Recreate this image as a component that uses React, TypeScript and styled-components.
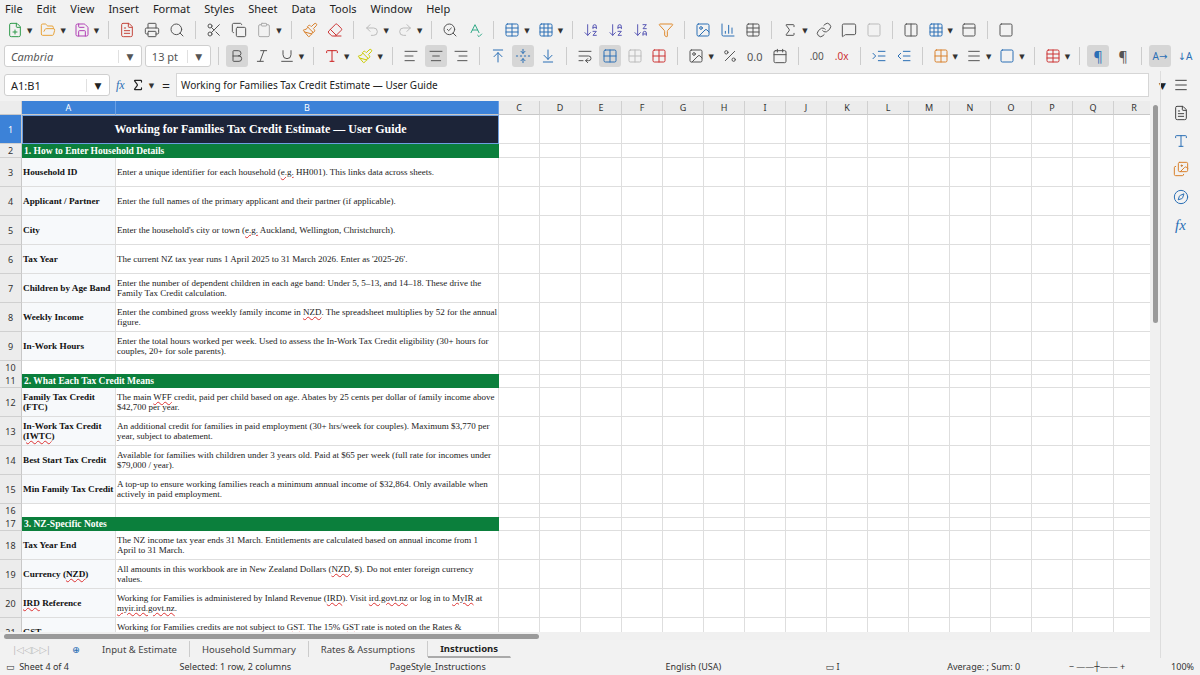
import React from "react";
import styled, { createGlobalStyle } from "styled-components";
import {
  FilePlus, FolderOpen, Save, FileText, Printer, Search, Scissors, Copy, Clipboard, Paintbrush, Eraser,
  Undo2, Redo2, SearchCheck, SpellCheck, Table, Grid3x3, ArrowDownAZ, ArrowDownZA, Filter, Image, BarChart3,
  Sigma, Link, MessageSquare, Square, Columns2, PanelTop, Bold, Italic, Underline,
  AlignLeft, AlignCenter, AlignRight, ArrowUpToLine, FoldVertical, ArrowDownToLine, WrapText, Percent,
  Calendar, IndentIncrease, IndentDecrease, Grid2x2, Menu, Type, Images, Compass,
} from "lucide-react";

const Global = createGlobalStyle`
  html, body { margin: 0; padding: 0; background: #f0f0f0; overflow: hidden; }
  body { font-family: "Noto Sans", "DejaVu Sans", sans-serif; font-size: 12px; color: #222; }
`;

const Frame = styled.div`
  width: 1200px; height: 675px; display: flex; flex-direction: column; background: #f2f2f2;
`;

const MenuBar = styled.div`
  height: 17px; display: flex; align-items: center; gap: 14px; padding-left: 5px; font-size: 11px;
`;

const ToolRow = styled.div`
  height: 26px; display: flex; align-items: center; gap: 3px; padding: 0 4px; color: #555;
  svg { width: 16px; height: 16px; stroke-width: 1.5; }
`;

const Sep = styled.div` width: 1px; height: 18px; background: #ccc; margin: 0 4px; `;

const Btn = styled.div<{ $on?: boolean; $c?: string }>`
  width: 22px; height: 22px; display: flex; align-items: center; justify-content: center;
  border-radius: 3px; background: ${(p) => (p.$on ? "#d6d6d6" : "transparent")}; color: ${(p) => p.$c || "#555"};
`;

const Caret = styled.span` font-size: 7px; color: #333; margin: 0 2px 0 -2px; `;

const Combo = styled.div<{ $w: number }>`
  width: ${(p) => p.$w}px; height: 22px; background: #fff; border: 1px solid #cfcfcf; border-radius: 3px;
  display: flex; align-items: center; justify-content: space-between; padding-left: 6px; font-size: 11px;
  box-sizing: border-box;
  span:last-child { width: 22px; text-align: center; font-size: 9px; border-left: 1px solid #e0e0e0; }
`;

const FormulaRow = styled.div`
  height: 28px; display: flex; align-items: center; gap: 6px; padding: 0 4px; margin-top: 2px;
`;

const FormulaInput = styled.div`
  flex: 1; height: 22px; background: #fff; border: 1px solid #d6d6d6; display: flex; align-items: center;
  padding-left: 4px; font-size: 10px; margin-right: 4px;
`;

const Body = styled.div` flex: 1; display: flex; min-height: 0; margin-top: 2px; `;
const SheetArea = styled.div` width: 1160px; display: flex; flex-direction: column; `;
const GridWrap = styled.div` height: 534px; display: flex; overflow: hidden; background: #fff; `;
const GridInner = styled.div` width: 1150px; overflow: hidden; `;
const VScroll = styled.div`
  width: 10px; background: #f0f0f0; display: flex; justify-content: center; padding-top: 4px;
  div { width: 5px; height: 218px; background: #9a9a9a; border-radius: 3px; }
`;

const COLS = "22px 94px 383px repeat(16, 41px)";
const GridRow = styled.div<{ $h: number }>`
  display: grid; grid-template-columns: ${COLS}; height: ${(p) => p.$h}px;
`;

const ColHead = styled.div<{ $sel?: boolean }>`
  background: ${(p) => (p.$sel ? "#3c82d8" : "#ececec")}; color: ${(p) => (p.$sel ? "#fff" : "#333")};
  border-right: 1px solid ${(p) => (p.$sel ? "#6aa0e6" : "#d0d0d0")}; border-bottom: 1px solid #c8c8c8;
  font-size: 9px; display: flex; align-items: center; justify-content: center;
`;

const RowHead = styled.div<{ $sel?: boolean }>`
  background: ${(p) => (p.$sel ? "#3c82d8" : "#ececec")}; color: ${(p) => (p.$sel ? "#fff" : "#333")};
  border-bottom: 1px solid #d0d0d0; border-right: 1px solid #c8c8c8;
  font-size: 9px; display: flex; align-items: center; justify-content: center;
`;

const Cell = styled.div`
  border-right: 1px solid #dedede; border-bottom: 1px solid #dedede; box-sizing: border-box; overflow: hidden;
`;

const Title = styled.div`
  grid-column: span 2; background: #1c2438; color: #fff; border: 1px solid #6d9fe0;
  font-family: "Liberation Serif", "DejaVu Serif", serif; font-weight: bold; font-size: 12px;
  display: flex; align-items: center; justify-content: center;
`;

const Section = styled.div`
  grid-column: span 2; background: #0b7f3c; color: #fff; font-family: "Liberation Serif", serif;
  font-weight: bold; font-size: 9.5px; display: flex; align-items: center; padding-left: 2px;
`;

const Label = styled(Cell)`
  background: #f7f9fb; font-family: "Liberation Serif", serif; font-weight: bold; font-size: 9.2px;
  display: flex; align-items: center; padding-left: 1px; line-height: 10px; color: #111;
`;

const Desc = styled(Cell)`
  font-family: "Liberation Serif", serif; font-size: 9px; display: flex; align-items: center;
  padding: 0 1px; line-height: 10.5px; color: #222;
`;

const Typo = styled.span` text-decoration: underline wavy #d33; text-decoration-thickness: 1px; `;

const HScroll = styled.div`
  height: 8px; background: #f0f0f0; display: flex; align-items: center; padding-left: 4px;
  div { width: 535px; height: 5px; background: #9a9a9a; border-radius: 3px; }
`;

const TabBar = styled.div`
  height: 18px; display: flex; align-items: center; font-size: 9.5px; color: #444;
`;
const Tab = styled.div<{ $on?: boolean }>`
  padding: 0 12px; height: 16px; display: flex; align-items: center;
  border-right: 1px solid ${(p) => (p.$on ? "transparent" : "#ccc")};
  ${(p) => p.$on && "font-weight: bold; color: #222; border-bottom: 2px solid #aaa;"}
`;

const StatusBar = styled.div`
  height: 17px; display: flex; align-items: center; font-size: 9px; color: #333; background: #f2f2f2;
`;
const Stat = styled.div<{ $w: number }>` width: ${(p) => p.$w}px; padding-left: 6px; `;

const SideBar = styled.div`
  width: 40px; display: flex; flex-direction: column; align-items: center; gap: 12px; padding-top: 6px;
  border-left: 1px solid #ddd; color: #2a6fb5; margin-top: -30px;
  svg { width: 16px; height: 16px; stroke-width: 1.5; }
`;

const U = (s: string) => <Typo>{s}</Typo>;

type R = { n: number; h: number; label?: React.ReactNode; desc?: React.ReactNode; section?: string };
const rows: R[] = [
  { n: 2, h: 14, section: "1. How to Enter Household Details" },
  { n: 3, h: 29, label: "Household ID", desc: <>Enter a unique identifier for each household ({U("e.g.")} HH001). This links data across sheets.</> },
  { n: 4, h: 29, label: "Applicant / Partner", desc: "Enter the full names of the primary applicant and their partner (if applicable)." },
  { n: 5, h: 29, label: "City", desc: <>Enter the household's city or town ({U("e.g.")} Auckland, Wellington, Christchurch).</> },
  { n: 6, h: 29, label: "Tax Year", desc: "The current NZ tax year runs 1 April 2025 to 31 March 2026. Enter as '2025-26'." },
  { n: 7, h: 29, label: "Children by Age Band", desc: "Enter the number of dependent children in each age band: Under 5, 5–13, and 14–18. These drive the Family Tax Credit calculation." },
  { n: 8, h: 29, label: "Weekly Income", desc: <>Enter the combined gross weekly family income in {U("NZD")}. The spreadsheet multiplies by 52 for the annual figure.</> },
  { n: 9, h: 29, label: "In-Work Hours", desc: "Enter the total hours worked per week. Used to assess the In-Work Tax Credit eligibility (30+ hours for couples, 20+ for sole parents)." },
  { n: 10, h: 13 },
  { n: 11, h: 14, section: "2. What Each Tax Credit Means" },
  { n: 12, h: 29, label: "Family Tax Credit (FTC)", desc: <>The main {U("WFF")} credit, paid per child based on age. Abates by 25 cents per dollar of family income above $42,700 per year.</> },
  { n: 13, h: 29, label: <>In-Work Tax Credit ({U("IWTC")})</>, desc: "An additional credit for families in paid employment (30+ hrs/week for couples). Maximum $3,770 per year, subject to abatement." },
  { n: 14, h: 29, label: "Best Start Tax Credit", desc: "Available for families with children under 3 years old. Paid at $65 per week (full rate for incomes under $79,000 / year)." },
  { n: 15, h: 29, label: "Min Family Tax Credit", desc: "A top-up to ensure working families reach a minimum annual income of $32,864. Only available when actively in paid employment." },
  { n: 16, h: 13 },
  { n: 17, h: 14, section: "3. NZ-Specific Notes" },
  { n: 18, h: 29, label: "Tax Year End", desc: "The NZ income tax year ends 31 March. Entitlements are calculated based on annual income from 1 April to 31 March." },
  { n: 19, h: 29, label: <>Currency ({U("NZD")})</>, desc: <>All amounts in this workbook are in New Zealand Dollars ({U("NZD")}, $). Do not enter foreign currency values.</> },
  { n: 20, h: 29, label: <>{U("IRD")} Reference</>, desc: <>Working for Families is administered by Inland Revenue ({U("IRD")}). Visit {U("ird.govt.nz")} or log in to {U("MyIR")} at {U("myir.ird.govt.nz")}.</> },
  { n: 21, h: 29, label: "GST", desc: <>Working for Families credits are not subject to {U("GST")}. The 15% {U("GST")} rate is noted on the Rates &amp; Assumptions sheet.</> },
];

const letters = "CDEFGHIJKLMNOPQR".split("");
const Empties = () => <>{letters.map((l) => <Cell key={l} />)}</>;

export default function App() {
  return (
    <Frame>
      <Global />
      <MenuBar>
        {["File", "Edit", "View", "Insert", "Format", "Styles", "Sheet", "Data", "Tools", "Window", "Help"].map((m) => <span key={m}>{m}</span>)}
      </MenuBar>
      <ToolRow>
        <Btn $c="#2e9a4a"><FilePlus /></Btn><Caret>▼</Caret>
        <Btn $c="#e8a33a"><FolderOpen /></Btn><Caret>▼</Caret>
        <Btn $c="#b13fb5"><Save /></Btn><Caret>▼</Caret><Sep />
        <Btn $c="#c4453c"><FileText /></Btn><Btn><Printer /></Btn><Btn><Search /></Btn><Sep />
        <Btn><Scissors /></Btn><Btn><Copy /></Btn><Btn $c="#aaa"><Clipboard /></Btn><Caret>▼</Caret><Sep />
        <Btn $c="#d9812c"><Paintbrush /></Btn><Btn $c="#c33"><Eraser /></Btn><Sep />
        <Btn $c="#bbb"><Undo2 /></Btn><Caret>▼</Caret><Btn $c="#bbb"><Redo2 /></Btn><Caret>▼</Caret><Sep />
        <Btn><SearchCheck /></Btn><Btn $c="#3a8"><SpellCheck /></Btn><Sep />
        <Btn $c="#2a6fb5"><Table /></Btn><Caret>▼</Caret><Btn $c="#2a6fb5"><Grid3x3 /></Btn><Caret>▼</Caret><Sep />
        <Btn $c="#5a5ab5"><ArrowDownAZ /></Btn><Btn $c="#5a5ab5"><ArrowDownAZ /></Btn><Btn $c="#5a5ab5"><ArrowDownZA /></Btn><Btn $c="#e08a2c"><Filter /></Btn><Sep />
        <Btn $c="#2a6fb5"><Image /></Btn><Btn $c="#2a6fb5"><BarChart3 /></Btn><Btn><Table /></Btn><Sep />
        <Btn><Sigma /></Btn><Caret>▼</Caret><Btn><Link /></Btn><Btn><MessageSquare /></Btn><Btn $c="#bbb"><Square /></Btn><Sep />
        <Btn><Columns2 /></Btn><Btn $c="#2a6fb5"><Grid3x3 /></Btn><Caret>▼</Caret><Btn><PanelTop /></Btn><Sep /><Btn><Square /></Btn>
      </ToolRow>
      <ToolRow>
        <Combo $w={138}><i>Cambria</i><span>▼</span></Combo>
        <Combo $w={66}><span>13 pt</span><span>▼</span></Combo><Sep />
        <Btn $on><Bold /></Btn><Btn><Italic /></Btn><Btn><Underline /></Btn><Caret>▼</Caret><Sep />
        <Btn $c="#c22"><Type /></Btn><Caret>▼</Caret><Btn $c="#cc0"><Paintbrush /></Btn><Caret>▼</Caret><Sep />
        <Btn><AlignLeft /></Btn><Btn $on><AlignCenter /></Btn><Btn><AlignRight /></Btn><Sep />
        <Btn $c="#2a6fb5"><ArrowUpToLine /></Btn><Btn $on $c="#2a6fb5"><FoldVertical /></Btn><Btn $c="#2a6fb5"><ArrowDownToLine /></Btn><Sep />
        <Btn><WrapText /></Btn><Btn $on $c="#2a6fb5"><Grid2x2 /></Btn><Btn $c="#bbb"><Grid2x2 /></Btn><Btn $c="#c33"><Grid2x2 /></Btn><Sep />
        <Btn><Image /></Btn><Caret>▼</Caret><Btn><Percent /></Btn><Btn><span style={{ fontSize: 11 }}>0.0</span></Btn><Btn><Calendar /></Btn><Sep />
        <Btn><span style={{ fontSize: 10 }}>.00</span></Btn><Btn $c="#c33"><span style={{ fontSize: 10 }}>.0x</span></Btn><Sep />
        <Btn $c="#2a6fb5"><IndentIncrease /></Btn><Btn $c="#2a6fb5"><IndentDecrease /></Btn><Sep />
        <Btn $c="#d9812c"><Grid2x2 /></Btn><Caret>▼</Caret><Btn><Menu /></Btn><Caret>▼</Caret><Btn $c="#2a6fb5"><Square /></Btn><Caret>▼</Caret><Sep />
        <Btn $c="#c33"><Table /></Btn><Caret>▼</Caret><Sep />
        <Btn $on $c="#2a6fb5"><span style={{ fontSize: 14 }}>¶</span></Btn><Btn><span style={{ fontSize: 14 }}>¶</span></Btn><Sep />
        <Btn $on $c="#2a6fb5"><span style={{ fontSize: 10 }}>A→</span></Btn><Btn $c="#2a6fb5"><span style={{ fontSize: 10 }}>↓A</span></Btn>
      </ToolRow>
      <FormulaRow>
        <Combo $w={106}><span>A1:B1</span><span>▼</span></Combo>
        <span style={{ color: "#2a6fb5", fontStyle: "italic", fontFamily: "serif" }}>fx</span>
        <Sigma size={14} /><Caret>▼</Caret><span style={{ fontSize: 14 }}>=</span>
        <FormulaInput>Working for Families Tax Credit Estimate — User Guide</FormulaInput>
        <span style={{ fontSize: 9, marginRight: 30 }}>▼</span>
      </FormulaRow>
      <Body>
        <SheetArea>
          <GridWrap>
            <GridInner>
              <GridRow $h={14}>
                <ColHead /><ColHead $sel>A</ColHead><ColHead $sel>B</ColHead>
                {letters.map((l) => <ColHead key={l}>{l}</ColHead>)}
              </GridRow>
              <GridRow $h={29}>
                <RowHead $sel>1</RowHead>
                <Title>Working for Families Tax Credit Estimate — User Guide</Title>
                <Empties />
              </GridRow>
              {rows.map((r) => (
                <GridRow key={r.n} $h={r.h}>
                  <RowHead>{r.n}</RowHead>
                  {r.section ? <Section>{r.section}</Section> : r.label ? (
                    <><Label><div>{r.label}</div></Label><Desc><div>{r.desc}</div></Desc></>
                  ) : (<><Cell /><Cell /></>)}
                  <Empties />
                </GridRow>
              ))}
            </GridInner>
            <VScroll><div /></VScroll>
          </GridWrap>
          <HScroll><div /></HScroll>
          <TabBar>
            <span style={{ color: "#bbb", padding: "0 12px", letterSpacing: -1 }}>|◁ ◁ ▷ ▷|</span>
            <span style={{ color: "#2a6fb5", padding: "0 10px" }}>⊕</span>
            <Tab>Input &amp; Estimate</Tab><Tab>Household Summary</Tab><Tab>Rates &amp; Assumptions</Tab><Tab $on>Instructions</Tab>
          </TabBar>
        </SheetArea>
        <SideBar>
          <Menu color="#444" /><FileText color="#444" /><Type /><Images color="#d9812c" /><Compass /><span style={{ fontStyle: "italic", fontFamily: "serif", fontSize: 15 }}>fx</span>
        </SideBar>
      </Body>
      <StatusBar>
        <Stat $w={174}>▭ &nbsp;Sheet 4 of 4</Stat>
        <Stat $w={212}>Selected: 1 row, 2 columns</Stat>
        <Stat $w={280}>PageStyle_Instructions</Stat>
        <Stat $w={160}>English (USA)</Stat>
        <Stat $w={120}>▭ I</Stat>
        <Stat $w={120}>Average: ; Sum: 0</Stat>
        <Stat $w={100}>− ——┼—— +</Stat>
        <Stat $w={30}>100%</Stat>
      </StatusBar>
    </Frame>
  );
}
